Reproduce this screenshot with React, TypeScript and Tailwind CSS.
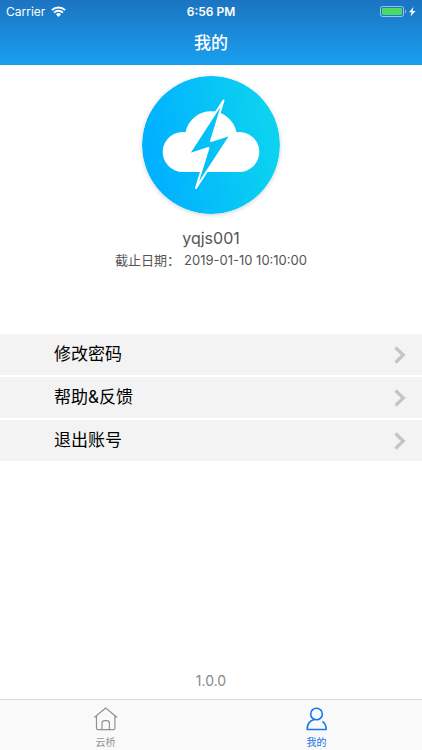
import { useState } from "react";

type MenuItem = {
    id: string;
    label: string;
};

const menuItems: MenuItem[] = [
    { id: "password", label: "修改密码" },
    { id: "help", label: "帮助&反馈" },
    { id: "logout", label: "退出账号" },
];

function StatusBar() {
    return (
        <div className="grid h-5 grid-cols-3 items-center px-1.5 pt-0.5 text-[12px] leading-5">
            <div className="flex items-center gap-1.5">
                <span>Carrier</span>
                <svg width="15" height="12" viewBox="0 0 15 12" fill="none" stroke="currentColor" strokeWidth="2">
                    <path d="M.9 4.1a9.4 9.4 0 0 1 13.2 0" />
                    <path d="M3.1 6.6a6.2 6.2 0 0 1 8.8 0" />
                    <path d="M7.500 11 5 8.400a3.500 3.500 0 0 1 5 0z" fill="currentColor" stroke="none" />
                </svg>
            </div>
            <span className="text-center font-semibold">6:56 PM</span>
            <div className="flex items-center justify-end">
                <svg width="37" height="12" viewBox="0 0 37 12">
                    <rect x="1.5" y="0.5" width="23" height="10" rx="2" fill="none" stroke="#fff" strokeOpacity="0.55" />
                    <rect x="3" y="2" width="20" height="7" rx="1" fill="#4cd964" />
                    <path d="M26 3.5v4c1.3-.7 1.3-3.3 0-4z" fill="#fff" fillOpacity="0.55" />
                    <path d="M34.5 1 30 6.300h2.600L31.500 10.500l5-5.500h-2.800z" fill="#fff" />
                </svg>
            </div>
        </div>
    );
}

function Logo() {
    return (
        <svg width="138" height="138" viewBox="0 0 138 138" className="rounded-full shadow-[0_1px_4px_rgba(0,0,0,0.18)]">
            <defs>
                <linearGradient id="sky" gradientUnits="userSpaceOnUse" x1="10" y1="80" x2="128" y2="58">
                    <stop offset="0" stopColor="#00b1ff" />
                    <stop offset="1" stopColor="#0cd2f0" />
                </linearGradient>
            </defs>
            <circle cx="69" cy="69" r="69" fill="url(#sky)" />
            <path d="M41 96a20 20 0 1 1 2.5-39.8a26 26 0 0 1 51 0A20 20 0 1 1 97 96z" fill="#fff" />
            {/* the rim only shows where the bolt leaves the cloud */}
            <path
                d="M81.5 24.5 46.500 78.500 66.500 72 54 112 89 58.500 69 65z"
                fill="url(#sky)"
                stroke="#fff"
                strokeWidth="2"
                strokeLinejoin="round"
            />
        </svg>
    );
}

function Chevron() {
    return (
        <svg width="12" height="18" viewBox="0 0 12 18" fill="none" stroke="#c4c4c4" strokeWidth="3.2">
            <path d="M1.500 1.500 9.300 9l-7.800 7.500" />
        </svg>
    );
}

function HomeIcon() {
    return (
        <svg width="24" height="24" viewBox="0 0 24 24" fill="none" stroke="currentColor" strokeWidth="1.2" strokeLinecap="round" strokeLinejoin="round">
            <path d="M.6 10.200 11.700 1l11.100 9.200" />
            <path d="M2.500 8.800v12.400a1.500 1.500 0 0 0 1.500 1.500h15.400a1.500 1.500 0 0 0 1.500-1.500V8.800" />
            <path d="M8 22.600v-6.400a2.500 2.500 0 0 1 2.500-2.500h2.400a2.500 2.500 0 0 1 2.500 2.500v6.400" />
        </svg>
    );
}

function UserIcon() {
    return (
        <svg width="24" height="24" viewBox="0 0 24 24" fill="none" stroke="currentColor" strokeWidth="1.6" strokeLinecap="round" strokeLinejoin="round">
            <circle cx="11.500" cy="7" r="5.800" />
            <path d="M9 12.500C5 13.700 2.200 17.500 2.200 22.500h18.900c.1-3-.8-5.800-3.200-7.600" />
        </svg>
    );
}

export default function App() {
    const [tab, setTab] = useState<"bridge" | "mine">("mine");

    return (
        <div className="flex min-h-screen flex-col bg-white font-[Inter,'Noto_Sans_CJK_SC',sans-serif]">
            <header className="bg-linear-to-b from-[#1b74c1] to-[#199ff0] text-white">
                <StatusBar />
                <h1 className="pt-[9px] pb-2 text-center text-[17px] leading-7 font-medium">我的</h1>
            </header>

            <main className="flex flex-1 flex-col">
                <section className="flex flex-col items-center pt-[11px] text-[#555]">
                    <Logo />
                    <p className="mt-3 text-[16px] leading-6">yqjs001</p>
                    <p className="flex gap-1 text-[13px] leading-5">
                        <span>截止日期：</span>
                        <span>2019-01-10 10:10:00</span>
                    </p>
                </section>

                <ul className="mt-16 flex flex-col gap-0.5">
                    {menuItems.map((item) => (
                        <li key={item.id}>
                            <button className="flex h-[41px] w-full items-center justify-between bg-[#f3f3f3] pr-4 pl-[54px] text-[17px] text-black">
                                <span>{item.label}</span>
                                <Chevron />
                            </button>
                        </li>
                    ))}
                </ul>

                <p className="mt-auto pb-2 text-center text-[14px] leading-5 text-[#888]">1.0.0</p>
            </main>

            <nav className="grid h-[51px] grid-cols-2 border-t border-[#dcdcdc] bg-[#f9f9f9] text-[10px] leading-4">
                <button
                    onClick={() => setTab("bridge")}
                    className={`flex flex-col items-center gap-[3px] pt-[7px] ${tab === "bridge" ? "text-[#1677ea]" : "text-[#929292]"}`}
                >
                    <HomeIcon />
                    <span>云桥</span>
                </button>
                <button
                    onClick={() => setTab("mine")}
                    className={`flex flex-col items-center gap-[3px] pt-[7px] ${tab === "mine" ? "text-[#1677ea]" : "text-[#929292]"}`}
                >
                    <UserIcon />
                    <span>我的</span>
                </button>
            </nav>
        </div>
    );
}
